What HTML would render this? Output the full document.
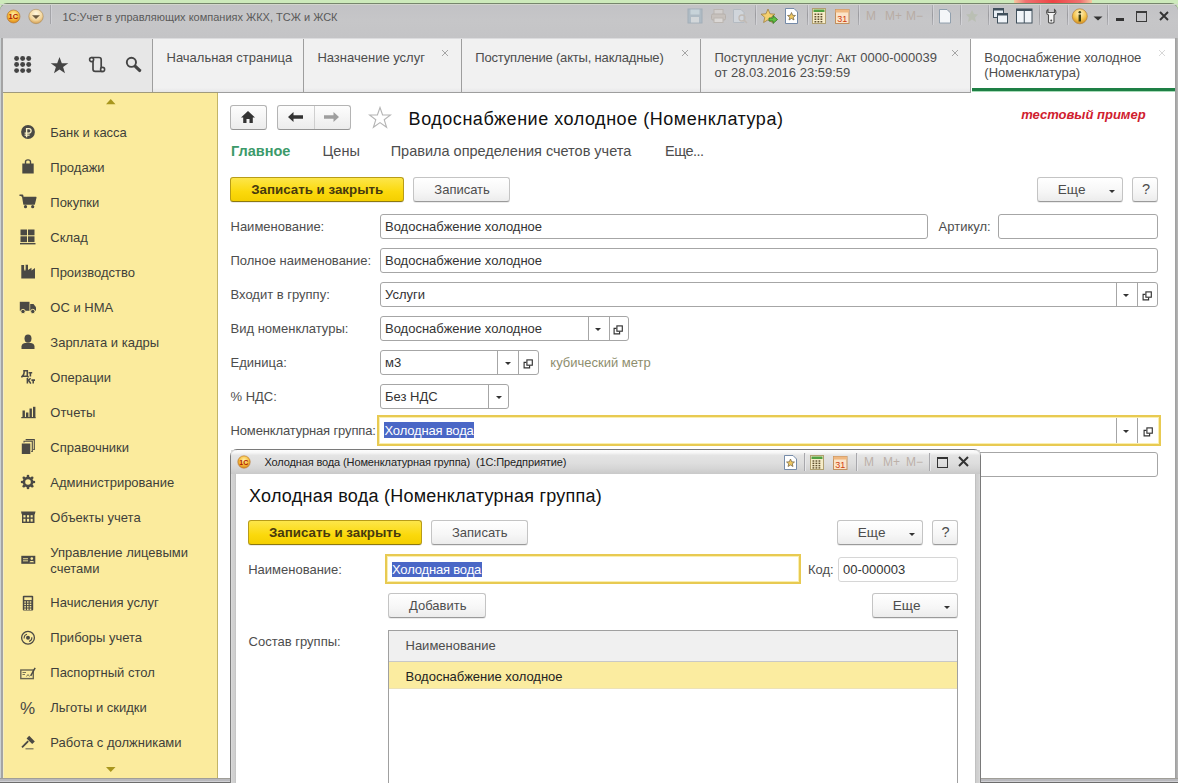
<!DOCTYPE html><html><head><meta charset="utf-8"><style>html,body{margin:0;padding:0}body{width:1178px;height:783px;overflow:hidden;position:relative;background:#fff;font-family:"Liberation Sans", sans-serif}.t{position:absolute;white-space:nowrap;font-family:"Liberation Sans", sans-serif}</style></head><body>
<div style="position:absolute;left:0px;top:0px;width:1178px;height:12px;background:#cdeabb;"></div>
<div style="position:absolute;left:1014px;top:0px;width:78px;height:3px;background:linear-gradient(90deg,#f5c8a0,#f07070 15%,#ee4444 50%,#f07070 85%,#f5c8a0);"></div>
<div style="position:absolute;left:0px;top:3px;width:1178px;height:35px;background:linear-gradient(#c2c2c5,#c6c6c8 50%,#c4c4c6);border-top:1px solid #76866c;box-sizing:border-box;border-radius:7px 7px 0 0;"></div>
<div style="position:absolute;left:0px;top:4px;width:1178px;height:1px;background:#d2d6cc;"></div>
<div class="t" style="left:62.4px;top:12.39px;font-size:11.00px;line-height:11.00px;color:#5a5a5a;font-weight:400;">1С:Учет в управляющих компаниях ЖКХ, ТСЖ и ЖСК</div>
<svg style="position:absolute;left:5px;top:8px;" width="18" height="18" viewBox="0 0 18 18"><defs><radialGradient id="lg" cx="50%" cy="35%" r="60%"><stop offset="0" stop-color="#fff2b0"/><stop offset="0.6" stop-color="#f8c040"/><stop offset="1" stop-color="#e09020"/></radialGradient></defs><circle cx="8.5" cy="8.5" r="6.5" fill="url(#lg)" stroke="#b07030" stroke-width="0.6"/><text x="8.3" y="11.2" font-size="7.5" font-weight="700" text-anchor="middle" fill="#b02000" font-family="Liberation Sans">1С</text></svg>
<svg style="position:absolute;left:27px;top:8px;" width="18" height="18" viewBox="0 0 18 18"><defs><radialGradient id="dg" cx="50%" cy="30%" r="65%"><stop offset="0" stop-color="#fff8e0"/><stop offset="0.7" stop-color="#f3d59a"/><stop offset="1" stop-color="#d8a860"/></radialGradient></defs><circle cx="9" cy="8.5" r="7.2" fill="url(#dg)" stroke="#a88858" stroke-width="0.6"/><path d="M5 7.2H13L9 11Z" fill="#6a5a40"/></svg>
<div style="position:absolute;left:50px;top:5px;width:1px;height:19px;background:#a4a4a8;box-shadow:1px 0 0 #d0d0d4;"></div>
<div style="position:absolute;left:0px;top:38px;width:3px;height:745px;background:linear-gradient(90deg,#ccd2d4 0,#ccd2d4 50%,#a4a4a4 50%);"></div>
<div style="position:absolute;left:1175px;top:38px;width:3px;height:745px;background:linear-gradient(90deg,#9c9c9c,#b8b8b8);"></div>
<div style="position:absolute;left:0px;top:778px;width:1178px;height:5px;background:linear-gradient(#a09e98 0,#a09e98 20%,#b8b8bc 20%,#b8b8bc 60%,#d0d0d4 60%,#d0d0d4 80%,#6c6c6c 80%);"></div>
<div style="position:absolute;left:3px;top:38px;width:149px;height:54px;background:#e7e7e7;"></div>
<div style="position:absolute;left:153px;top:38px;width:817px;height:54px;background:#f1f1f1;"></div>
<div style="position:absolute;left:971px;top:38px;width:204px;height:54px;background:#fff;"></div>
<div style="position:absolute;left:153px;top:88px;width:817px;height:4px;background:linear-gradient(#f1f1f1,#e6e6e8);"></div>
<div style="position:absolute;left:152px;top:38px;width:1px;height:55px;background:#9e9e9e;"></div>
<div style="position:absolute;left:303px;top:38px;width:1px;height:55px;background:#9e9e9e;"></div>
<div style="position:absolute;left:461px;top:38px;width:1px;height:55px;background:#9e9e9e;"></div>
<div style="position:absolute;left:700px;top:38px;width:1px;height:55px;background:#9e9e9e;"></div>
<div style="position:absolute;left:970px;top:38px;width:1px;height:55px;background:#9e9e9e;"></div>
<div style="position:absolute;left:3px;top:92px;width:968px;height:1px;background:#9e9e9e;"></div>
<div style="position:absolute;left:3px;top:92px;width:215px;height:1px;background:#a09a7c;"></div>
<div style="position:absolute;left:3px;top:38px;width:1172px;height:1px;background:#dcdcde;"></div>
<div style="position:absolute;left:972px;top:88px;width:203px;height:3px;background:#1e7f45;"></div>
<div style="position:absolute;left:972px;top:91px;width:203px;height:1px;background:#a8dcb8;"></div>
<div class="t" style="left:166.5px;top:51.00px;font-size:13.00px;line-height:13.00px;color:#4d4d4d;font-weight:400;">Начальная страница</div>
<div class="t" style="left:317.4px;top:51.00px;font-size:13.00px;line-height:13.00px;color:#4d4d4d;font-weight:400;">Назначение услуг</div>
<div class="t" style="left:475.3px;top:51.00px;font-size:13.00px;line-height:13.00px;color:#4d4d4d;font-weight:400;letter-spacing:-0.18px;">Поступление (акты, накладные)</div>
<div class="t" style="left:714.5px;top:50.70px;font-size:13.00px;line-height:13.00px;color:#4d4d4d;font-weight:400;">Поступление услуг: Акт 0000-000039</div>
<div class="t" style="left:714.5px;top:66.40px;font-size:13.00px;line-height:13.00px;color:#4d4d4d;font-weight:400;">от 28.03.2016 23:59:59</div>
<div class="t" style="left:984.3px;top:50.70px;font-size:13.00px;line-height:13.00px;color:#4d4d4d;font-weight:400;">Водоснабжение холодное</div>
<div class="t" style="left:984.3px;top:66.40px;font-size:13.00px;line-height:13.00px;color:#4d4d4d;font-weight:400;">(Номенклатура)</div>
<svg style="position:absolute;left:441px;top:48.5px;" width="8" height="8" viewBox="0 0 8 8"><path d="M1 1L7 7M7 1L1 7" stroke="#9c9c9c" stroke-width="0.9"/></svg>
<svg style="position:absolute;left:680.6px;top:48.5px;" width="8" height="8" viewBox="0 0 8 8"><path d="M1 1L7 7M7 1L1 7" stroke="#9c9c9c" stroke-width="0.9"/></svg>
<svg style="position:absolute;left:950.6px;top:48.5px;" width="8" height="8" viewBox="0 0 8 8"><path d="M1 1L7 7M7 1L1 7" stroke="#9c9c9c" stroke-width="0.9"/></svg>
<svg style="position:absolute;left:1158px;top:48.5px;" width="8" height="8" viewBox="0 0 8 8"><path d="M1 1L7 7M7 1L1 7" stroke="#d4d4d4" stroke-width="0.9"/></svg>
<svg style="position:absolute;left:13px;top:55px;" width="22" height="22" viewBox="0 0 22 22"><circle cx="3.60" cy="3.50" r="2.45" fill="#444"/><circle cx="3.60" cy="9.55" r="2.45" fill="#444"/><circle cx="3.60" cy="15.60" r="2.45" fill="#444"/><circle cx="9.65" cy="3.50" r="2.45" fill="#444"/><circle cx="9.65" cy="9.55" r="2.45" fill="#444"/><circle cx="9.65" cy="15.60" r="2.45" fill="#444"/><circle cx="15.70" cy="3.50" r="2.45" fill="#444"/><circle cx="15.70" cy="9.55" r="2.45" fill="#444"/><circle cx="15.70" cy="15.60" r="2.45" fill="#444"/></svg>
<svg style="position:absolute;left:50px;top:56px;" width="19" height="19" viewBox="0 0 19 19"><path d="M9.5 1L11.8 7.2H18.3L13.1 11.1L15 17.3L9.5 13.5L4 17.3L5.9 11.1L0.7 7.2H7.2Z" fill="#444"/></svg>
<svg style="position:absolute;left:82px;top:50px;" width="30" height="28" viewBox="0 0 30 28"><path d="M9.5 7.5H17Q19.2 7.5 19.2 9.7V18.2M20.8 21.4H13.2Q11 21.4 11 19.2V11" fill="none" stroke="#444" stroke-width="1.7"/><circle cx="9.6" cy="9.6" r="2" fill="#f4f4f4" stroke="#444" stroke-width="1.6"/><circle cx="20.6" cy="19.4" r="2" fill="#f4f4f4" stroke="#444" stroke-width="1.6"/></svg>
<svg style="position:absolute;left:118px;top:50px;" width="30" height="28" viewBox="0 0 30 28"><circle cx="13.4" cy="12.3" r="4.6" fill="none" stroke="#444" stroke-width="1.9"/><path d="M17.6 16.6L21.6 20.4" stroke="#444" stroke-width="3.3" stroke-linecap="round"/></svg>
<div style="position:absolute;left:3px;top:93px;width:215px;height:685px;background:#fbeb9d;border-left:1px solid #f4eec4;box-sizing:border-box;"></div>
<div style="position:absolute;left:217px;top:93px;width:1px;height:685px;background:#c3b467;"></div>
<svg style="position:absolute;left:105.5px;top:98.5px;" width="10" height="6" viewBox="0 0 10 6"><path d="M0 5.2H9.5L4.75 0Z" fill="#a8961e"/></svg>
<svg style="position:absolute;left:105.5px;top:767px;" width="10" height="6" viewBox="0 0 10 6"><path d="M0 0H9.5L4.75 5Z" fill="#a8961e"/></svg>
<div class="t" style="left:50.3px;top:126.00px;font-size:13.00px;line-height:13.00px;color:#403f3a;font-weight:400;">Банк и касса</div>
<div class="t" style="left:50.3px;top:161.00px;font-size:13.00px;line-height:13.00px;color:#403f3a;font-weight:400;">Продажи</div>
<div class="t" style="left:50.3px;top:196.00px;font-size:13.00px;line-height:13.00px;color:#403f3a;font-weight:400;">Покупки</div>
<div class="t" style="left:50.3px;top:231.00px;font-size:13.00px;line-height:13.00px;color:#403f3a;font-weight:400;">Склад</div>
<div class="t" style="left:50.3px;top:266.00px;font-size:13.00px;line-height:13.00px;color:#403f3a;font-weight:400;">Производство</div>
<div class="t" style="left:50.3px;top:301.00px;font-size:13.00px;line-height:13.00px;color:#403f3a;font-weight:400;">ОС и НМА</div>
<div class="t" style="left:50.3px;top:336.00px;font-size:13.00px;line-height:13.00px;color:#403f3a;font-weight:400;">Зарплата и кадры</div>
<div class="t" style="left:50.3px;top:371.00px;font-size:13.00px;line-height:13.00px;color:#403f3a;font-weight:400;">Операции</div>
<div class="t" style="left:50.3px;top:406.00px;font-size:13.00px;line-height:13.00px;color:#403f3a;font-weight:400;">Отчеты</div>
<div class="t" style="left:50.3px;top:441.00px;font-size:13.00px;line-height:13.00px;color:#403f3a;font-weight:400;">Справочники</div>
<div class="t" style="left:50.3px;top:476.00px;font-size:13.00px;line-height:13.00px;color:#403f3a;font-weight:400;">Администрирование</div>
<div class="t" style="left:50.3px;top:511.00px;font-size:13.00px;line-height:13.00px;color:#403f3a;font-weight:400;">Объекты учета</div>
<div class="t" style="left:50.3px;top:546.00px;font-size:13.00px;line-height:13.00px;color:#403f3a;font-weight:400;">Управление лицевыми</div>
<div class="t" style="left:50.3px;top:561.50px;font-size:13.00px;line-height:13.00px;color:#403f3a;font-weight:400;">счетами</div>
<div class="t" style="left:50.3px;top:596.00px;font-size:13.00px;line-height:13.00px;color:#403f3a;font-weight:400;">Начисления услуг</div>
<div class="t" style="left:50.3px;top:631.00px;font-size:13.00px;line-height:13.00px;color:#403f3a;font-weight:400;">Приборы учета</div>
<div class="t" style="left:50.3px;top:666.00px;font-size:13.00px;line-height:13.00px;color:#403f3a;font-weight:400;">Паспортный стол</div>
<div class="t" style="left:50.3px;top:701.00px;font-size:13.00px;line-height:13.00px;color:#403f3a;font-weight:400;">Льготы и скидки</div>
<div class="t" style="left:50.3px;top:736.00px;font-size:13.00px;line-height:13.00px;color:#403f3a;font-weight:400;">Работа с должниками</div>
<svg style="position:absolute;left:20px;top:124px;" width="16" height="16" viewBox="0 0 16 16"><circle cx="8" cy="8" r="6.9" fill="#4a4944"/><path d="M6.6 13.2V4.6H9C11.8 4.6 11.8 9.1 9 9.1H4.6M4.6 11.1H9.6" fill="none" stroke="#fbf3c8" stroke-width="1.35"/></svg>
<svg style="position:absolute;left:21px;top:158px;" width="15" height="17" viewBox="0 0 15 17"><path d="M4.5 6V3.8C4.5 1.2 9.5 1.2 9.5 3.8V6" fill="none" stroke="#4a4944" stroke-width="1.4"/><rect x="1.3" y="5.5" width="11.4" height="10" fill="#4a4944"/></svg>
<svg style="position:absolute;left:19px;top:194px;" width="18" height="15" viewBox="0 0 18 15"><path d="M0.5 1.2H3.5L5 10H15.2L16.8 3.5H4.2" fill="#4a4944" stroke="#4a4944" stroke-width="1.5" stroke-linejoin="round"/><circle cx="6.5" cy="12.7" r="1.6" fill="#4a4944"/><circle cx="13.7" cy="12.7" r="1.6" fill="#4a4944"/></svg>
<svg style="position:absolute;left:20px;top:229px;" width="16" height="16" viewBox="0 0 16 16"><rect x="0.5" y="0.5" width="6.5" height="5.8" fill="#4a4944"/><rect x="8" y="0.5" width="6.5" height="5.8" fill="#4a4944"/><rect x="0.5" y="7.3" width="6.5" height="5.8" fill="#4a4944"/><rect x="8" y="7.3" width="6.5" height="5.8" fill="#4a4944"/><rect x="0" y="14" width="15.5" height="1.4" fill="#4a4944"/></svg>
<svg style="position:absolute;left:21px;top:264px;" width="15" height="15" viewBox="0 0 15 15"><path d="M0.3 14.5V8.5L0.3 1H3.3V6.5L4.5 6.5V0.8H7V6L10.5 3.8V6.5L14 4V14.5Z" fill="#4a4944"/><rect x="3.3" y="1.2" width="1" height="4" fill="#fbeb9d"/></svg>
<svg style="position:absolute;left:19px;top:301px;" width="18" height="13" viewBox="0 0 18 13"><path d="M0.8 0.8H10.5V9.8H0.8Z" fill="#4a4944"/><path d="M11.2 3H14.5L17 6.2V9.8H11.2Z" fill="#4a4944"/><circle cx="4" cy="10.5" r="2.2" fill="#4a4944" stroke="#fbeb9d" stroke-width="0.9"/><circle cx="13.8" cy="10.5" r="2.2" fill="#4a4944" stroke="#fbeb9d" stroke-width="0.9"/></svg>
<svg style="position:absolute;left:21px;top:334px;" width="15" height="16" viewBox="0 0 15 16"><ellipse cx="7" cy="4.6" rx="3.5" ry="4.2" fill="#4a4944"/><path d="M0.5 15V12.5C0.5 10 3 9 4.5 9H9.5C11 9 13.5 10 13.5 12.5V15Z" fill="#4a4944"/></svg>
<svg style="position:absolute;left:16px;top:365px;" width="24" height="25" viewBox="0 0 24 25"><path d="M7.2 5.8H11.3V11.2M8.2 5.8C8.2 9 7.5 10.5 6.2 11.2M5.6 11.2H12.2M5.9 11V12.6M12 11V12.6M12.6 7.7H16.2M14.4 7.7V11.5M11.4 13V18.6M11.6 16L14.6 13.2M12.6 15.2L14.8 18.6M15.4 15.1H19M17.2 15.1V18.6" fill="none" stroke="#4a4944" stroke-width="1.55"/></svg>
<svg style="position:absolute;left:21px;top:406px;" width="15" height="13" viewBox="0 0 15 13"><rect x="1.5" y="4.5" width="2.4" height="6.5" fill="#4a4944"/><rect x="5" y="6.5" width="2.4" height="4.5" fill="#4a4944"/><rect x="8.5" y="2.5" width="2.4" height="8.5" fill="#4a4944"/><rect x="12" y="0.8" width="2.4" height="10.2" fill="#4a4944"/><rect x="0.3" y="11" width="14.4" height="1.2" fill="#4a4944"/></svg>
<svg style="position:absolute;left:21px;top:439px;" width="14" height="16" viewBox="0 0 14 16"><rect x="0.8" y="4.5" width="8.5" height="10.5" fill="#4a4944"/><path d="M3 3.5V2.3H11.3V12.5H10.2M5.2 1.3V0.6H13.3V10.5H12.2" fill="none" stroke="#4a4944" stroke-width="1.1"/></svg>
<svg style="position:absolute;left:20px;top:474px;" width="16" height="16" viewBox="0 0 16 16"><circle cx="13.90" cy="8.00" r="1.35" fill="#4a4944"/><circle cx="12.17" cy="12.17" r="1.35" fill="#4a4944"/><circle cx="8.00" cy="13.90" r="1.35" fill="#4a4944"/><circle cx="3.83" cy="12.17" r="1.35" fill="#4a4944"/><circle cx="2.10" cy="8.00" r="1.35" fill="#4a4944"/><circle cx="3.83" cy="3.83" r="1.35" fill="#4a4944"/><circle cx="8.00" cy="2.10" r="1.35" fill="#4a4944"/><circle cx="12.17" cy="3.83" r="1.35" fill="#4a4944"/><circle cx="8" cy="8" r="4.1" fill="none" stroke="#4a4944" stroke-width="2.6"/></svg>
<svg style="position:absolute;left:20px;top:510px;" width="16" height="15" viewBox="0 0 16 15"><rect x="2" y="2" width="12.5" height="11" fill="#4a4944"/><path d="M1 1.5H15.5L14.8 4.2H1.7Z" fill="#4a4944"/><rect x="3.4" y="5.2" width="2.1" height="2.2" fill="#fbeb9d"/><rect x="3.4" y="8.8" width="2.1" height="2.8" fill="#fbeb9d"/><rect x="7.0" y="5.2" width="2.1" height="2.2" fill="#fbeb9d"/><rect x="7.0" y="8.8" width="2.1" height="2.8" fill="#fbeb9d"/><rect x="10.6" y="5.2" width="2.1" height="2.2" fill="#fbeb9d"/><rect x="10.6" y="8.8" width="2.1" height="2.8" fill="#fbeb9d"/></svg>
<svg style="position:absolute;left:21px;top:555px;" width="15" height="10" viewBox="0 0 15 10"><rect x="0.3" y="0.8" width="14" height="8" fill="#4a4944"/><rect x="2" y="3.3" width="5" height="0.9" fill="#fbeb9d"/><rect x="2" y="5.4" width="5" height="0.9" fill="#fbeb9d"/><circle cx="10.8" cy="3.6" r="1.3" fill="#fbeb9d"/><path d="M8.5 7.3C8.5 5.5 13 5.5 13 7.3Z" fill="#fbeb9d"/></svg>
<svg style="position:absolute;left:22px;top:595px;" width="12" height="16" viewBox="0 0 12 16"><rect x="0.8" y="0.8" width="10.4" height="14.6" rx="1" fill="#4a4944"/><rect x="2.3" y="2.3" width="7.4" height="2.8" fill="#fbeb9d"/><rect x="2.3" y="6.3" width="1.6" height="1.4" fill="#fbeb9d"/><rect x="2.3" y="8.7" width="1.6" height="1.4" fill="#fbeb9d"/><rect x="2.3" y="11.1" width="1.6" height="1.4" fill="#fbeb9d"/><rect x="2.3" y="13.5" width="1.6" height="1.4" fill="#fbeb9d"/><rect x="5.0" y="6.3" width="1.6" height="1.4" fill="#fbeb9d"/><rect x="5.0" y="8.7" width="1.6" height="1.4" fill="#fbeb9d"/><rect x="5.0" y="11.1" width="1.6" height="1.4" fill="#fbeb9d"/><rect x="5.0" y="13.5" width="1.6" height="1.4" fill="#fbeb9d"/><rect x="7.7" y="6.3" width="1.6" height="1.4" fill="#fbeb9d"/><rect x="7.7" y="8.7" width="1.6" height="1.4" fill="#fbeb9d"/><rect x="7.7" y="11.1" width="1.6" height="1.4" fill="#fbeb9d"/><rect x="7.7" y="13.5" width="1.6" height="1.4" fill="#fbeb9d"/></svg>
<svg style="position:absolute;left:20px;top:630px;" width="16" height="16" viewBox="0 0 16 16"><circle cx="8" cy="7.8" r="6.4" fill="none" stroke="#4a4944" stroke-width="1.3"/><circle cx="8" cy="7.8" r="2" fill="#4a4944"/><path d="M4.2 8.5A4 4 0 0 1 7 4.2M11.8 7.2A4 4 0 0 1 9 11.4" fill="none" stroke="#4a4944" stroke-width="1.1"/></svg>
<svg style="position:absolute;left:20px;top:666px;" width="16" height="14" viewBox="0 0 16 14"><rect x="0.8" y="4" width="12.5" height="8.6" fill="none" stroke="#6a6650" stroke-width="1.4"/><path d="M2.5 6.5H6M2.5 8.5H5M6.5 10.5L8 8.5L9.5 10.5" fill="none" stroke="#6a6650" stroke-width="0.9"/><path d="M10 9.5L14.5 1.5L15.8 2.3L11.3 10.3Z" fill="#4a4944"/></svg>
<div class="t" style="left:20px;top:700.5px;font-size:17px;line-height:16px;color:#4a4944">%</div>
<svg style="position:absolute;left:21px;top:735px;" width="15" height="15" viewBox="0 0 15 15"><path d="M8.2 0.8L13.8 6.4L11.2 9L5.6 3.4Z" fill="#4a4944"/><path d="M7.2 6.2L1 12.4" stroke="#4a4944" stroke-width="1.8"/><rect x="4.5" y="13.2" width="8" height="1.2" fill="#77735a"/></svg>
<div style="position:absolute;left:755px;top:5px;width:1px;height:20px;background:linear-gradient(#b0b0b4,#9a9a9e 50%,#b0b0b4);box-shadow:1px 0 0 #d2d2d6;"></div>
<div style="position:absolute;left:806.5px;top:5px;width:1px;height:20px;background:linear-gradient(#b0b0b4,#9a9a9e 50%,#b0b0b4);box-shadow:1px 0 0 #d2d2d6;"></div>
<div style="position:absolute;left:857.5px;top:5px;width:1px;height:20px;background:linear-gradient(#b0b0b4,#9a9a9e 50%,#b0b0b4);box-shadow:1px 0 0 #d2d2d6;"></div>
<div style="position:absolute;left:931.5px;top:5px;width:1px;height:20px;background:linear-gradient(#b0b0b4,#9a9a9e 50%,#b0b0b4);box-shadow:1px 0 0 #d2d2d6;"></div>
<div style="position:absolute;left:959.5px;top:5px;width:1px;height:20px;background:linear-gradient(#b0b0b4,#9a9a9e 50%,#b0b0b4);box-shadow:1px 0 0 #d2d2d6;"></div>
<div style="position:absolute;left:987.5px;top:5px;width:1px;height:20px;background:linear-gradient(#b0b0b4,#9a9a9e 50%,#b0b0b4);box-shadow:1px 0 0 #d2d2d6;"></div>
<div style="position:absolute;left:1038.5px;top:5px;width:1px;height:20px;background:linear-gradient(#b0b0b4,#9a9a9e 50%,#b0b0b4);box-shadow:1px 0 0 #d2d2d6;"></div>
<div style="position:absolute;left:1066.5px;top:5px;width:1px;height:20px;background:linear-gradient(#b0b0b4,#9a9a9e 50%,#b0b0b4);box-shadow:1px 0 0 #d2d2d6;"></div>
<div style="position:absolute;left:1106.5px;top:5px;width:1px;height:20px;background:linear-gradient(#b0b0b4,#9a9a9e 50%,#b0b0b4);box-shadow:1px 0 0 #d2d2d6;"></div>
<svg style="position:absolute;left:687px;top:8px;opacity:0.75" width="16" height="16" viewBox="0 0 16 16"><rect x="1" y="1" width="14" height="14" fill="#a8b8c4" stroke="#98a8b4"/><rect x="3.5" y="1.5" width="9" height="5" fill="#c8d8e0"/><rect x="4" y="9" width="8" height="5.5" fill="#d8dde0"/></svg>
<svg style="position:absolute;left:710px;top:8px;opacity:0.7" width="17" height="16" viewBox="0 0 17 16"><rect x="4" y="1.5" width="9" height="5" fill="#d8d4d0" stroke="#b8b0a8"/><rect x="1.5" y="6" width="14" height="6" rx="1.5" fill="#c8c0b8" stroke="#b0a8a0"/><rect x="4" y="10" width="9" height="4.5" fill="#e4e0dc" stroke="#b8b0a8"/></svg>
<svg style="position:absolute;left:732px;top:8px;opacity:0.8" width="17" height="16" viewBox="0 0 17 16"><path d="M1.5 1.5H9L12 4.5V14.5H1.5Z" fill="#d4dae0" stroke="#b0b8c0"/><circle cx="10" cy="10" r="3" fill="none" stroke="#c0b8b0" stroke-width="1.3"/><path d="M12 12L15 15" stroke="#c0b8b0" stroke-width="1.5"/></svg>
<svg style="position:absolute;left:760px;top:8px;" width="19" height="17" viewBox="0 0 19 17"><path d="M8 1L10 5.8L15 6.2L11.2 9.4L12.4 14.5L8 11.8L3.6 14.5L4.8 9.4L1 6.2L6 5.8Z" fill="#f4d070" stroke="#a08040" stroke-width="0.8"/><path d="M9 10H13V7.5L17.5 11.5L13 15.5V13H9Z" fill="#60c040" stroke="#307020" stroke-width="0.8"/></svg>
<svg style="position:absolute;left:785px;top:8px;" width="13" height="16" viewBox="0 0 13 16"><path d="M0.5 0.5H9L12.5 4V15.5H0.5Z" fill="#fff" stroke="#6880a0" stroke-width="0.9"/><path d="M6.5 4.5L7.7 7.3L10.5 7.5L8.3 9.3L9 12L6.5 10.5L4 12L4.7 9.3L2.5 7.5L5.3 7.3Z" fill="#f0c860" stroke="#706040" stroke-width="0.7"/></svg>
<svg style="position:absolute;left:812px;top:8px;" width="14" height="16" viewBox="0 0 14 16"><rect x="0.5" y="0.5" width="13" height="15" fill="#f6ecc8" stroke="#b0a070"/><rect x="1.5" y="1.5" width="11" height="2.5" fill="#50a040"/><rect x="2.5" y="5.5" width="1.8" height="1.5" fill="#605030"/><rect x="2.5" y="8.0" width="1.8" height="1.5" fill="#605030"/><rect x="2.5" y="10.5" width="1.8" height="1.5" fill="#605030"/><rect x="2.5" y="13.0" width="1.8" height="1.5" fill="#605030"/><rect x="5.5" y="5.5" width="1.8" height="1.5" fill="#605030"/><rect x="5.5" y="8.0" width="1.8" height="1.5" fill="#605030"/><rect x="5.5" y="10.5" width="1.8" height="1.5" fill="#605030"/><rect x="5.5" y="13.0" width="1.8" height="1.5" fill="#605030"/><rect x="8.5" y="5.5" width="1.8" height="1.5" fill="#605030"/><rect x="8.5" y="8.0" width="1.8" height="1.5" fill="#605030"/><rect x="8.5" y="10.5" width="1.8" height="1.5" fill="#605030"/><rect x="8.5" y="13.0" width="1.8" height="1.5" fill="#605030"/></svg>
<svg style="position:absolute;left:835px;top:8px;" width="15" height="16" viewBox="0 0 15 16"><rect x="0.5" y="1.5" width="13.5" height="14" fill="#fbe4c8" stroke="#c09060"/><rect x="0.5" y="1.5" width="13.5" height="3" fill="#f0b880"/><text x="7.3" y="13.8" font-size="9" text-anchor="middle" fill="#d04010" font-family="Liberation Sans">31</text></svg>
<div class="t" style="left:866px;top:9px;font-size:12px;line-height:14px;color:#b8aca4;font-weight:400">M</div>
<div class="t" style="left:885px;top:9px;font-size:12px;line-height:14px;color:#b8aca4;font-weight:400">M+</div>
<div class="t" style="left:906px;top:9px;font-size:12px;line-height:14px;color:#b8aca4;font-weight:400">M−</div>
<svg style="position:absolute;left:939px;top:8px;" width="13" height="16" viewBox="0 0 13 16"><path d="M0.5 1.5H8L11.5 5V15H0.5Z" fill="#f4f6f8" stroke="#8898a8" stroke-width="0.9"/></svg>
<svg style="position:absolute;left:966px;top:9px;opacity:0.6" width="13" height="14" viewBox="0 0 13 14"><path d="M6 1L8 5L12 5.5L9 8.5L10 13L6 10.5L2 13L3 8.5L0 5.5L4 5Z" fill="#b4bca8"/></svg>
<svg style="position:absolute;left:993px;top:8px;" width="16" height="16" viewBox="0 0 16 16"><rect x="0.5" y="0.5" width="10" height="9" fill="#e8eef4" stroke="#40505c"/><rect x="0.5" y="0.5" width="10" height="2" fill="#40505c"/><rect x="4.5" y="5.5" width="10" height="9.5" fill="#f0f4f8" stroke="#40505c"/><rect x="4.5" y="5.5" width="10" height="2" fill="#40505c"/></svg>
<svg style="position:absolute;left:1016px;top:8px;" width="17" height="16" viewBox="0 0 17 16"><rect x="0.5" y="1" width="15.5" height="14" fill="#f0f4f8" stroke="#40505c"/><rect x="0.5" y="1" width="15.5" height="2" fill="#40505c"/><path d="M8.25 3V15" stroke="#40505c"/></svg>
<svg style="position:absolute;left:1045px;top:8px;" width="13" height="17" viewBox="0 0 13 17"><path d="M3 1.5C1 3 1 6 3.5 7V14C3.5 15.5 9 15.5 9 14V7C11.5 6 11.5 3 9.5 1.5V4.5H3V1.5Z" fill="#f4f4f4" stroke="#505050" stroke-width="1.1"/><circle cx="6.25" cy="12.5" r="1" fill="#505050"/></svg>
<svg style="position:absolute;left:1071px;top:8px;" width="18" height="17" viewBox="0 0 18 17"><defs><radialGradient id="ig" cx="50%" cy="30%" r="65%"><stop offset="0" stop-color="#fff4c8"/><stop offset="0.65" stop-color="#f4c44c"/><stop offset="1" stop-color="#d89828"/></radialGradient></defs><circle cx="8.8" cy="8.3" r="7.5" fill="url(#ig)" stroke="#b08040" stroke-width="0.7"/><circle cx="8.8" cy="4.2" r="1.3" fill="#404010"/><rect x="7.6" y="6.5" width="2.4" height="7" fill="#404010"/></svg>
<svg style="position:absolute;left:1093px;top:16px;" width="10" height="5" viewBox="0 0 10 5"><path d="M0.5 0.5H9.5L5 4.5Z" fill="#333"/></svg>
<div style="position:absolute;left:1116px;top:18px;width:8px;height:2.5px;background:#333;"></div>
<div style="position:absolute;left:1136px;top:11px;width:9px;height:8px;border:1.2px solid #3a3a3a;border-top-width:2.2px;"></div>
<svg style="position:absolute;left:1158.5px;top:10.5px;" width="10" height="10" viewBox="0 0 10 10"><path d="M1 1L9 9M9 1L1 9" stroke="#333" stroke-width="1.9"/></svg>
<div style="position:absolute;left:230px;top:105px;width:35px;height:23px;background:linear-gradient(#fdfdfd,#ececec);border:1px solid #b4b4b4;border-bottom-color:#959595;border-radius:3px;"></div>
<svg style="position:absolute;left:240px;top:110px;" width="16" height="14" viewBox="0 0 16 14"><path d="M8 1L15 7.5H12.8V13H9.5V9H6.5V13H3.2V7.5H1Z" fill="#333"/></svg>
<div style="position:absolute;left:277px;top:105px;width:72px;height:23px;background:linear-gradient(#fdfdfd,#ececec);border:1px solid #b4b4b4;border-bottom-color:#959595;border-radius:3px;"></div>
<div style="position:absolute;left:314px;top:106px;width:1px;height:23px;background:#cfcfcf;"></div>
<svg style="position:absolute;left:287px;top:111px;" width="18" height="12" viewBox="0 0 18 12"><path d="M1 6L6.5 1V4.3H16V7.7H6.5V11Z" fill="#333"/></svg>
<svg style="position:absolute;left:322px;top:111px;" width="18" height="12" viewBox="0 0 18 12"><path d="M17 6L11.5 1V4.3H2V7.7H11.5V11Z" fill="#9e9e9e"/></svg>
<svg style="position:absolute;left:368px;top:106px;" width="24" height="24" viewBox="0 0 24 24"><path d="M12 1.5L14.6 9H22.5L16.2 13.7L18.6 21.3L12 16.6L5.4 21.3L7.8 13.7L1.5 9H9.4Z" fill="none" stroke="#b4b4b4" stroke-width="1.1"/></svg>
<div class="t" style="left:408.6px;top:109.66px;font-size:18.00px;line-height:18.00px;color:#111;font-weight:400;letter-spacing:0.53px;">Водоснабжение холодное (Номенклатура)</div>
<div class="t" style="left:1021.2px;top:107.80px;font-size:13.00px;line-height:13.00px;color:#d0202e;font-weight:700;font-style:italic;">тестовый пример</div>
<div class="t" style="left:231px;top:144.13px;font-size:14.50px;line-height:14.50px;color:#3c9a6a;font-weight:700;">Главное</div>
<div class="t" style="left:322.6px;top:144.13px;font-size:14.50px;line-height:14.50px;color:#4d4d4d;font-weight:400;">Цены</div>
<div class="t" style="left:390.7px;top:144.13px;font-size:14.50px;line-height:14.50px;color:#4d4d4d;font-weight:400;">Правила определения счетов учета</div>
<div class="t" style="left:665px;top:144.13px;font-size:14.50px;line-height:14.50px;color:#4d4d4d;font-weight:400;letter-spacing:-0.5px;">Еще...</div>
<div style="position:absolute;left:230px;top:177px;width:172px;height:23px;background:linear-gradient(#fde64a,#fbd90c 60%,#f4cf00);border:1px solid #b89c18;border-bottom-color:#8c7810;border-radius:3px;box-shadow:0 1px 0 rgba(0,0,0,0.08);"></div>
<div class="t" style="left:251.2px;top:182.82px;font-size:13.33px;line-height:13.33px;color:#47390e;font-weight:700;">Записать и закрыть</div>
<div style="position:absolute;left:413px;top:177px;width:95px;height:23px;background:linear-gradient(#ffffff,#f6f6f6 60%,#ececec);border:1px solid #c4c4c4;border-bottom-color:#9a9a9a;border-radius:3px;box-shadow:0 1px 0 rgba(0,0,0,0.08);"></div>
<div class="t" style="left:434.3px;top:183.10px;font-size:13.00px;line-height:13.00px;color:#4d4d4d;font-weight:400;">Записать</div>
<div style="position:absolute;left:1037px;top:177px;width:84px;height:23px;background:linear-gradient(#ffffff,#f6f6f6 60%,#ececec);border:1px solid #c4c4c4;border-bottom-color:#9a9a9a;border-radius:3px;box-shadow:0 1px 0 rgba(0,0,0,0.08);"></div>
<div class="t" style="left:1057.8px;top:182.59px;font-size:13.60px;line-height:13.60px;color:#4d4d4d;font-weight:400;">Еще</div>
<svg style="position:absolute;left:1109px;top:189.5px;" width="6" height="4" viewBox="0 0 6 4"><path d="M0 0H6L3 3Z" fill="#333"/></svg>
<div style="position:absolute;left:1132px;top:177px;width:24px;height:23px;background:linear-gradient(#ffffff,#f6f6f6 60%,#ececec);border:1px solid #c4c4c4;border-bottom-color:#9a9a9a;border-radius:3px;box-shadow:0 1px 0 rgba(0,0,0,0.08);"></div>
<div class="t" style="left:1142px;top:181.83px;font-size:14.50px;line-height:14.50px;color:#4d4d4d;font-weight:400;">?</div>
<div class="t" style="left:230.5px;top:220.00px;font-size:13.00px;line-height:13.00px;color:#4d4d4d;font-weight:400;">Наименование:</div>
<div class="t" style="left:230.5px;top:253.50px;font-size:13.00px;line-height:13.00px;color:#4d4d4d;font-weight:400;">Полное наименование:</div>
<div class="t" style="left:230.5px;top:287.50px;font-size:13.00px;line-height:13.00px;color:#4d4d4d;font-weight:400;">Входит в группу:</div>
<div class="t" style="left:230.5px;top:321.50px;font-size:13.00px;line-height:13.00px;color:#4d4d4d;font-weight:400;">Вид номенклатуры:</div>
<div class="t" style="left:230.5px;top:355.50px;font-size:13.00px;line-height:13.00px;color:#4d4d4d;font-weight:400;">Единица:</div>
<div class="t" style="left:230.5px;top:389.50px;font-size:13.00px;line-height:13.00px;color:#4d4d4d;font-weight:400;">% НДС:</div>
<div class="t" style="left:230.5px;top:423.50px;font-size:13.00px;line-height:13.00px;color:#4d4d4d;font-weight:400;letter-spacing:-0.14px;">Номенклатурная группа:</div>
<div style="position:absolute;left:380px;top:214px;width:546px;height:23px;background:#fff;border:1px solid #a6a6a6;border-radius:3px;"></div>
<div class="t" style="left:385px;top:220.10px;font-size:13.00px;line-height:13.00px;color:#333;font-weight:400;">Водоснабжение холодное</div>
<div class="t" style="left:938.6px;top:220.00px;font-size:13.00px;line-height:13.00px;color:#4d4d4d;font-weight:400;">Артикул:</div>
<div style="position:absolute;left:998px;top:214px;width:158px;height:23px;background:#fff;border:1px solid #a6a6a6;border-radius:3px;"></div>
<div style="position:absolute;left:380px;top:248px;width:776px;height:23px;background:#fff;border:1px solid #a6a6a6;border-radius:3px;"></div>
<div class="t" style="left:385px;top:254.10px;font-size:13.00px;line-height:13.00px;color:#333;font-weight:400;">Водоснабжение холодное</div>
<div style="position:absolute;left:380px;top:282px;width:776px;height:23px;background:#fff;border:1px solid #a6a6a6;border-radius:3px;"></div>
<div style="position:absolute;left:1115.5px;top:282px;width:1px;height:25px;background:#a6a6a6;"></div>
<svg style="position:absolute;left:1123.4px;top:293.8px;" width="6" height="4" viewBox="0 0 6 4"><path d="M0 0H6L3 3Z" fill="#333"/></svg>
<div style="position:absolute;left:1136.5px;top:282px;width:1px;height:25px;background:#a6a6a6;"></div>
<svg style="position:absolute;left:1141.95px;top:290.5px;" width="11" height="10" viewBox="0 0 11 10"><path d="M3.4 3.4H1.1V8.9H6.6V6.6" fill="none" stroke="#333" stroke-width="1.15"/><rect x="3.9" y="0.9" width="5.4" height="5.3" fill="none" stroke="#333" stroke-width="1.15"/></svg>
<div class="t" style="left:385px;top:288.10px;font-size:13.00px;line-height:13.00px;color:#333;font-weight:400;">Услуги</div>
<div style="position:absolute;left:380px;top:316px;width:247px;height:23px;background:#fff;border:1px solid #a6a6a6;border-radius:3px;"></div>
<div style="position:absolute;left:587.5px;top:316px;width:1px;height:25px;background:#a6a6a6;"></div>
<svg style="position:absolute;left:595.4px;top:327.8px;" width="6" height="4" viewBox="0 0 6 4"><path d="M0 0H6L3 3Z" fill="#333"/></svg>
<div style="position:absolute;left:608.5px;top:316px;width:1px;height:25px;background:#a6a6a6;"></div>
<svg style="position:absolute;left:613.45px;top:324.5px;" width="11" height="10" viewBox="0 0 11 10"><path d="M3.4 3.4H1.1V8.9H6.6V6.6" fill="none" stroke="#333" stroke-width="1.15"/><rect x="3.9" y="0.9" width="5.4" height="5.3" fill="none" stroke="#333" stroke-width="1.15"/></svg>
<div class="t" style="left:385px;top:322.10px;font-size:13.00px;line-height:13.00px;color:#333;font-weight:400;">Водоснабжение холодное</div>
<div style="position:absolute;left:380px;top:350px;width:157px;height:23px;background:#fff;border:1px solid #a6a6a6;border-radius:3px;"></div>
<div style="position:absolute;left:497.3px;top:350px;width:1px;height:25px;background:#a6a6a6;"></div>
<svg style="position:absolute;left:505.15px;top:361.8px;" width="6" height="4" viewBox="0 0 6 4"><path d="M0 0H6L3 3Z" fill="#333"/></svg>
<div style="position:absolute;left:518.2px;top:350px;width:1px;height:25px;background:#a6a6a6;"></div>
<svg style="position:absolute;left:523.3000000000001px;top:358.5px;" width="11" height="10" viewBox="0 0 11 10"><path d="M3.4 3.4H1.1V8.9H6.6V6.6" fill="none" stroke="#333" stroke-width="1.15"/><rect x="3.9" y="0.9" width="5.4" height="5.3" fill="none" stroke="#333" stroke-width="1.15"/></svg>
<div class="t" style="left:385px;top:356.10px;font-size:13.00px;line-height:13.00px;color:#333;font-weight:400;">м3</div>
<div class="t" style="left:550.3px;top:355.50px;font-size:13.00px;line-height:13.00px;color:#8e8e6e;font-weight:400;">кубический метр</div>
<div style="position:absolute;left:380px;top:384px;width:127px;height:23px;background:#fff;border:1px solid #a6a6a6;border-radius:3px;"></div>
<div style="position:absolute;left:488.4px;top:384px;width:1px;height:25px;background:#a6a6a6;"></div>
<svg style="position:absolute;left:496.09999999999997px;top:395.8px;" width="6" height="4" viewBox="0 0 6 4"><path d="M0 0H6L3 3Z" fill="#333"/></svg>
<div class="t" style="left:385px;top:390.10px;font-size:13.00px;line-height:13.00px;color:#333;font-weight:400;">Без НДС</div>
<div style="position:absolute;left:377px;top:415px;width:780px;height:27px;background:#fff;border:2px solid #e8ca52;box-shadow:inset 0 0 0 1px #faefb0;"></div>
<div style="position:absolute;left:1115.5px;top:418px;width:1px;height:25px;background:#a6a6a6;"></div>
<svg style="position:absolute;left:1123.4px;top:429.8px;" width="6" height="4" viewBox="0 0 6 4"><path d="M0 0H6L3 3Z" fill="#333"/></svg>
<div style="position:absolute;left:1136.5px;top:418px;width:1px;height:25px;background:#a6a6a6;"></div>
<svg style="position:absolute;left:1143.45px;top:426.5px;" width="11" height="10" viewBox="0 0 11 10"><path d="M3.4 3.4H1.1V8.9H6.6V6.6" fill="none" stroke="#333" stroke-width="1.15"/><rect x="3.9" y="0.9" width="5.4" height="5.3" fill="none" stroke="#333" stroke-width="1.15"/></svg>
<div style="position:absolute;left:384px;top:422px;width:90px;height:16px;background:#4a67c6;"></div>
<div class="t" style="left:384.5px;top:423.50px;font-size:13.00px;line-height:13.00px;color:#fff;font-weight:400;letter-spacing:-0.17px;">Холодная вода</div>
<div style="position:absolute;left:380px;top:452px;width:776px;height:23px;background:#fff;border:1px solid #a6a6a6;border-radius:3px;"></div>
<div style="position:absolute;left:230px;top:449px;width:751px;height:340px;background:#7a7a7a;border-radius:7px 7px 0 0;"></div>
<div style="position:absolute;left:231px;top:450px;width:5px;height:340px;background:linear-gradient(90deg,#dcdcdc,#d2d2d2 30%,#cfcfcf 70%,#c2c2c2);"></div>
<div style="position:absolute;left:975px;top:450px;width:5px;height:340px;background:linear-gradient(90deg,#bababa,#cecece 30%,#d2d2d2 70%,#dcdcdc);"></div>
<div style="position:absolute;left:231px;top:450px;width:749px;height:24px;background:linear-gradient(#fdfdfd,#f6f6f6 12%,#e4e4e4 22%,#dedede 55%,#d4d4d4 80%,#c9c9c9);border-radius:6px 6px 0 0;"></div>
<div style="position:absolute;left:236px;top:474px;width:739px;height:309px;background:#fff;"></div>
<svg style="position:absolute;left:236px;top:454px;" width="17" height="17" viewBox="0 0 17 17"><defs><radialGradient id="lg2" cx="50%" cy="35%" r="60%"><stop offset="0" stop-color="#fff2b0"/><stop offset="0.6" stop-color="#f8c040"/><stop offset="1" stop-color="#e09020"/></radialGradient></defs><circle cx="8" cy="8" r="6.2" fill="url(#lg2)" stroke="#b07030" stroke-width="0.6"/><text x="7.8" y="10.6" font-size="7" font-weight="700" text-anchor="middle" fill="#b02000" font-family="Liberation Sans">1С</text></svg>
<div class="t" style="left:264.4px;top:457.19px;font-size:11.00px;line-height:11.00px;color:#222;font-weight:400;letter-spacing:-0.12px;">Холодная вода (Номенклатурная группа)&nbsp; (1С:Предприятие)</div>
<div style="position:absolute;left:804px;top:453px;width:1px;height:18px;background:#a8a8ac;box-shadow:1px 0 0 #e8e8ea;"></div>
<div style="position:absolute;left:855.5px;top:453px;width:1px;height:18px;background:#a8a8ac;box-shadow:1px 0 0 #e8e8ea;"></div>
<div style="position:absolute;left:929px;top:453px;width:1px;height:18px;background:#a8a8ac;box-shadow:1px 0 0 #e8e8ea;"></div>
<svg style="position:absolute;left:784px;top:455px;" width="13" height="15" viewBox="0 0 13 15"><path d="M0.5 0.5H9L12.5 4V14.5H0.5Z" fill="#fff" stroke="#6880a0" stroke-width="0.9"/><path d="M6.5 4L7.7 6.8L10.5 7L8.3 8.8L9 11.5L6.5 10L4 11.5L4.7 8.8L2.5 7L5.3 6.8Z" fill="#f0c860" stroke="#706040" stroke-width="0.7"/></svg>
<svg style="position:absolute;left:810px;top:455px;" width="14" height="15" viewBox="0 0 14 15"><rect x="0.5" y="0.5" width="13" height="14" fill="#f6ecc8" stroke="#b0a070"/><rect x="1.5" y="1.5" width="11" height="2.5" fill="#50a040"/><rect x="2.5" y="5.3" width="1.8" height="1.4" fill="#605030"/><rect x="2.5" y="7.6" width="1.8" height="1.4" fill="#605030"/><rect x="2.5" y="9.9" width="1.8" height="1.4" fill="#605030"/><rect x="2.5" y="12.2" width="1.8" height="1.4" fill="#605030"/><rect x="5.5" y="5.3" width="1.8" height="1.4" fill="#605030"/><rect x="5.5" y="7.6" width="1.8" height="1.4" fill="#605030"/><rect x="5.5" y="9.9" width="1.8" height="1.4" fill="#605030"/><rect x="5.5" y="12.2" width="1.8" height="1.4" fill="#605030"/><rect x="8.5" y="5.3" width="1.8" height="1.4" fill="#605030"/><rect x="8.5" y="7.6" width="1.8" height="1.4" fill="#605030"/><rect x="8.5" y="9.9" width="1.8" height="1.4" fill="#605030"/><rect x="8.5" y="12.2" width="1.8" height="1.4" fill="#605030"/></svg>
<svg style="position:absolute;left:833px;top:455px;" width="15" height="15" viewBox="0 0 15 15"><rect x="0.5" y="1.5" width="13.5" height="13" fill="#fbe4c8" stroke="#c09060"/><rect x="0.5" y="1.5" width="13.5" height="3" fill="#f0b880"/><text x="7.3" y="13" font-size="9" text-anchor="middle" fill="#d04010" font-family="Liberation Sans">31</text></svg>
<div class="t" style="left:864px;top:455px;font-size:12px;line-height:14px;color:#bcb0a8;">M</div>
<div class="t" style="left:883px;top:455px;font-size:12px;line-height:14px;color:#bcb0a8;">M+</div>
<div class="t" style="left:906px;top:455px;font-size:12px;line-height:14px;color:#bcb0a8;">M−</div>
<div style="position:absolute;left:937px;top:457px;width:9px;height:8px;border:1.3px solid #333;border-top-width:2.5px;"></div>
<svg style="position:absolute;left:958px;top:456px;" width="11" height="11" viewBox="0 0 11 11"><path d="M1 1L10 10M10 1L1 10" stroke="#333" stroke-width="2"/></svg>
<div class="t" style="left:249px;top:486.56px;font-size:18.00px;line-height:18.00px;color:#111;font-weight:400;letter-spacing:0.25px;">Холодная вода (Номенклатурная группа)</div>
<div style="position:absolute;left:248px;top:520px;width:172px;height:23px;background:linear-gradient(#fde64a,#fbd90c 60%,#f4cf00);border:1px solid #b89c18;border-bottom-color:#8c7810;border-radius:3px;box-shadow:0 1px 0 rgba(0,0,0,0.08);"></div>
<div class="t" style="left:269px;top:525.82px;font-size:13.33px;line-height:13.33px;color:#47390e;font-weight:700;">Записать и закрыть</div>
<div style="position:absolute;left:431px;top:520px;width:95px;height:23px;background:linear-gradient(#ffffff,#f6f6f6 60%,#ececec);border:1px solid #c4c4c4;border-bottom-color:#9a9a9a;border-radius:3px;box-shadow:0 1px 0 rgba(0,0,0,0.08);"></div>
<div class="t" style="left:452px;top:526.10px;font-size:13.00px;line-height:13.00px;color:#4d4d4d;font-weight:400;">Записать</div>
<div style="position:absolute;left:837px;top:520px;width:84px;height:23px;background:linear-gradient(#ffffff,#f6f6f6 60%,#ececec);border:1px solid #c4c4c4;border-bottom-color:#9a9a9a;border-radius:3px;box-shadow:0 1px 0 rgba(0,0,0,0.08);"></div>
<div class="t" style="left:857.8px;top:525.59px;font-size:13.60px;line-height:13.60px;color:#4d4d4d;font-weight:400;">Еще</div>
<svg style="position:absolute;left:909px;top:532.5px;" width="6" height="4" viewBox="0 0 6 4"><path d="M0 0H6L3 3Z" fill="#333"/></svg>
<div style="position:absolute;left:932px;top:520px;width:24px;height:23px;background:linear-gradient(#ffffff,#f6f6f6 60%,#ececec);border:1px solid #c4c4c4;border-bottom-color:#9a9a9a;border-radius:3px;box-shadow:0 1px 0 rgba(0,0,0,0.08);"></div>
<div class="t" style="left:941.5px;top:524.83px;font-size:14.50px;line-height:14.50px;color:#4d4d4d;font-weight:400;">?</div>
<div class="t" style="left:248.2px;top:563.30px;font-size:13.00px;line-height:13.00px;color:#4d4d4d;font-weight:400;">Наименование:</div>
<div style="position:absolute;left:385px;top:554px;width:412px;height:26px;background:#fff;border:2px solid #e8ca52;box-shadow:inset 0 0 0 1px #faefb0;"></div>
<div style="position:absolute;left:391.8px;top:561.5px;width:90px;height:15px;background:#4a67c6;"></div>
<div class="t" style="left:392px;top:563.30px;font-size:13.00px;line-height:13.00px;color:#fff;font-weight:400;letter-spacing:-0.17px;">Холодная вода</div>
<div class="t" style="left:808px;top:563.30px;font-size:13.00px;line-height:13.00px;color:#4d4d4d;font-weight:400;">Код:</div>
<div style="position:absolute;left:838px;top:557px;width:118px;height:23px;background:#fff;border:1px solid #d6d6d6;border-radius:3px;"></div>
<div class="t" style="left:843px;top:563.10px;font-size:13.00px;line-height:13.00px;color:#333;font-weight:400;">00-000003</div>
<div style="position:absolute;left:388px;top:593px;width:96px;height:23px;background:linear-gradient(#ffffff,#f6f6f6 60%,#ececec);border:1px solid #c4c4c4;border-bottom-color:#9a9a9a;border-radius:3px;box-shadow:0 1px 0 rgba(0,0,0,0.08);"></div>
<div class="t" style="left:409px;top:599.10px;font-size:13.00px;line-height:13.00px;color:#4d4d4d;font-weight:400;">Добавить</div>
<div style="position:absolute;left:872px;top:593px;width:84px;height:23px;background:linear-gradient(#ffffff,#f6f6f6 60%,#ececec);border:1px solid #c4c4c4;border-bottom-color:#9a9a9a;border-radius:3px;box-shadow:0 1px 0 rgba(0,0,0,0.08);"></div>
<div class="t" style="left:892.8px;top:598.59px;font-size:13.60px;line-height:13.60px;color:#4d4d4d;font-weight:400;">Еще</div>
<svg style="position:absolute;left:944px;top:605.5px;" width="6" height="4" viewBox="0 0 6 4"><path d="M0 0H6L3 3Z" fill="#333"/></svg>
<div class="t" style="left:248.6px;top:635.00px;font-size:13.00px;line-height:13.00px;color:#4d4d4d;font-weight:400;">Состав группы:</div>
<div style="position:absolute;left:388px;top:630px;width:570px;height:160px;background:#fff;border:1px solid #a0a0a0;box-sizing:border-box;"></div>
<div style="position:absolute;left:389px;top:631px;width:568px;height:31px;background:#f0f0f0;border-bottom:1px solid #c8c8c8;box-sizing:border-box;"></div>
<div style="position:absolute;left:389px;top:662px;width:568px;height:27px;background:#fbeca0;border-bottom:1px solid #ece2b8;box-sizing:border-box;"></div>
<div class="t" style="left:405.5px;top:639.20px;font-size:13.00px;line-height:13.00px;color:#4d4d4d;font-weight:400;">Наименование</div>
<div class="t" style="left:405.5px;top:669.70px;font-size:13.00px;line-height:13.00px;color:#222;font-weight:400;">Водоснабжение холодное</div>
</body></html>
